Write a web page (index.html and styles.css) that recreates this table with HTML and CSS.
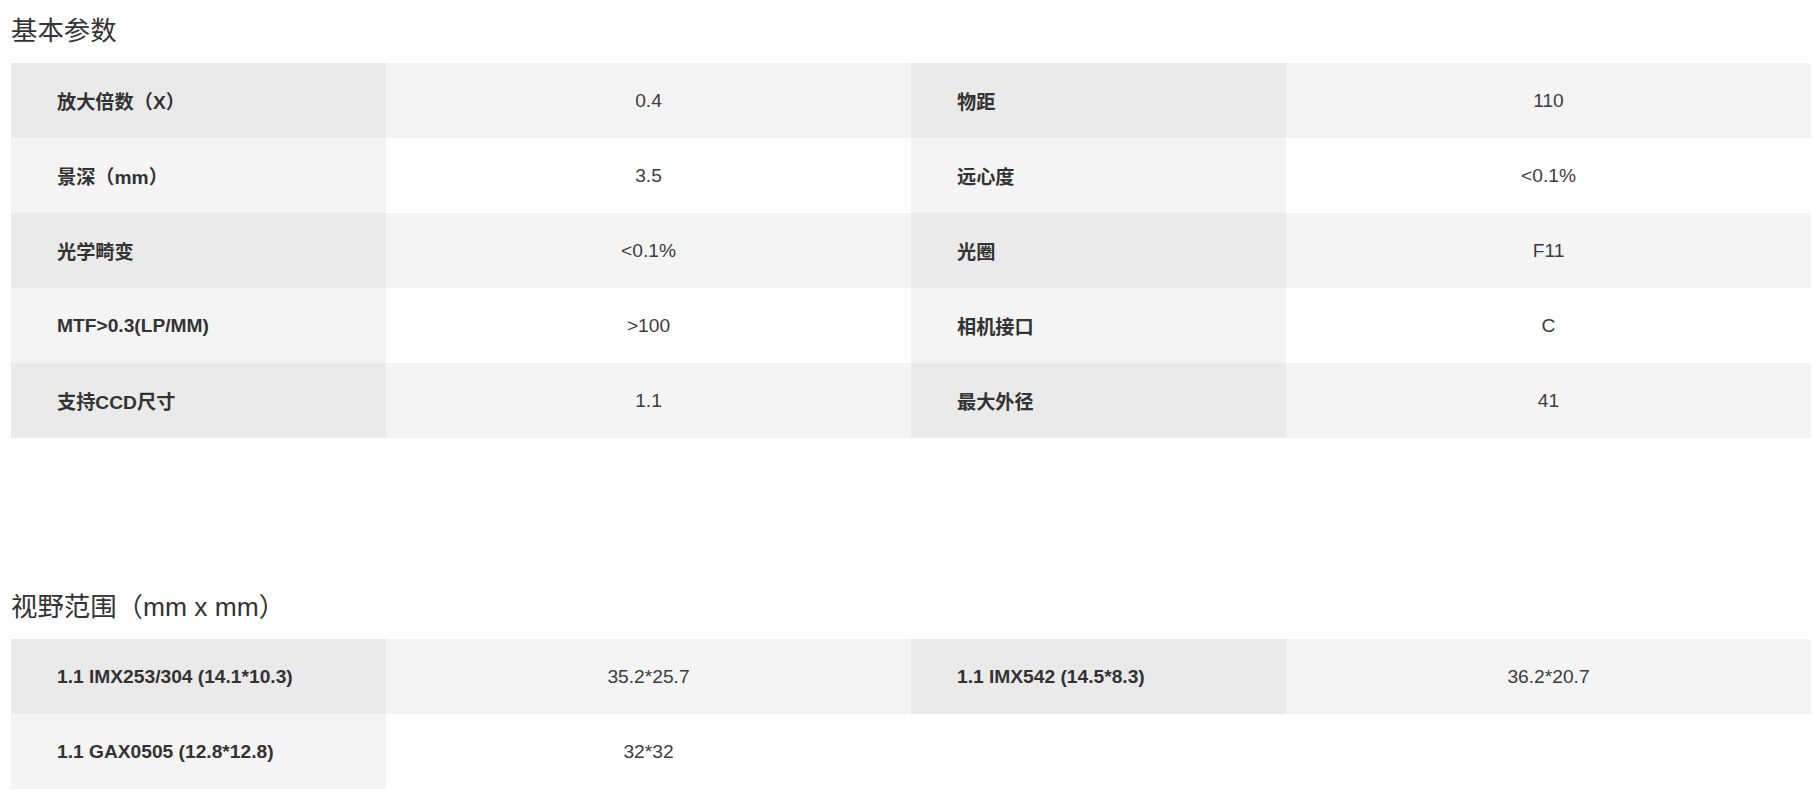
FILE: index.html
```html
<!DOCTYPE html>
<html lang="zh-CN">
<head>
<meta charset="utf-8">
<title>参数</title>
<link rel="stylesheet" href="styles.css">
</head>
<body>
<div class="page">
  <section class="section">
    <h2 class="title">基本参数</h2>
    <div class="table">
      <div class="row">
        <div class="label">放大倍数（X）</div><div class="value">0.4</div>
        <div class="label">物距</div><div class="value">110</div>
      </div>
      <div class="row">
        <div class="label">景深（mm）</div><div class="value">3.5</div>
        <div class="label">远心度</div><div class="value">&lt;0.1%</div>
      </div>
      <div class="row">
        <div class="label">光学畸变</div><div class="value">&lt;0.1%</div>
        <div class="label">光圈</div><div class="value">F11</div>
      </div>
      <div class="row">
        <div class="label">MTF&gt;0.3(LP/MM)</div><div class="value">&gt;100</div>
        <div class="label">相机接口</div><div class="value">C</div>
      </div>
      <div class="row">
        <div class="label">支持CCD尺寸</div><div class="value">1.1</div>
        <div class="label">最大外径</div><div class="value">41</div>
      </div>
    </div>
  </section>
  <section class="section section-second">
    <h2 class="title">视野范围（mm x mm）</h2>
    <div class="table">
      <div class="row">
        <div class="label">1.1 IMX253/304 (14.1*10.3)</div><div class="value">35.2*25.7</div>
        <div class="label">1.1 IMX542 (14.5*8.3)</div><div class="value">36.2*20.7</div>
      </div>
      <div class="row">
        <div class="label">1.1 GAX0505 (12.8*12.8)</div><div class="value">32*32</div>
        <div class="empty"></div><div class="empty"></div>
      </div>
    </div>
  </section>
</div>
</body>
</html>
```
FILE: styles.css
```css
html, body {
  margin: 0;
  padding: 0;
  background: #ffffff;
}

body {
  font-family: "Liberation Sans", "Noto Sans CJK SC", Arial, sans-serif;
  color: #333333;
}

.page {
  width: 1800px;
  padding-left: 11px;
}

.section-second {
  margin-top: 138px;
}

.title {
  margin: 0;
  height: 63px;
  line-height: 63px;
  font-size: 26.4px;
  font-weight: normal;
  color: #333333;
}

.table {
  display: flex;
  flex-direction: column;
}

.row {
  display: grid;
  grid-template-columns: 375px 525px 375px 525px;
  height: 75px;
}

.label,
.value {
  display: flex;
  align-items: center;
  font-size: 19.2px;
}

.label {
  padding-left: 46px;
  font-weight: bold;
  color: #333333;
}

.value {
  justify-content: center;
  color: #3c3c3c;
}

.row:nth-child(odd) .label { background: #eaeaea; }
.row:nth-child(odd) .value { background: #f4f4f4; }
.row:nth-child(even) .label { background: #f4f4f4; }
.row:nth-child(even) .value { background: #ffffff; }
.empty { background: #ffffff; }
```
